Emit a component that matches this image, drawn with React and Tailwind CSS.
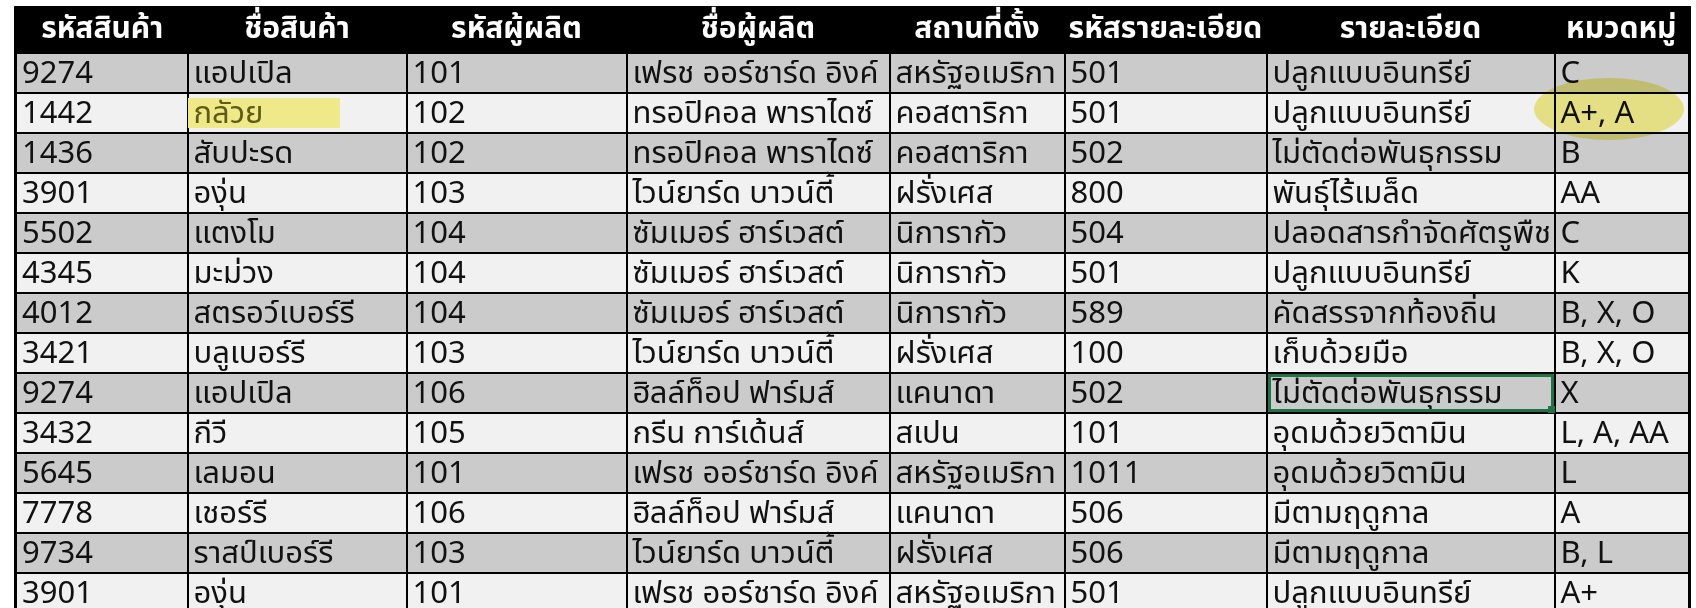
import React from "react";

const cols = [
  { title: "รหัสสินค้า", w: 172 },
  { title: "ชื่อสินค้า", w: 219 },
  { title: "รหัสผู้ผลิต", w: 220 },
  { title: "ชื่อผู้ผลิต", w: 263 },
  { title: "สถานที่ตั้ง", w: 175 },
  { title: "รหัสรายละเอียด", w: 202 },
  { title: "รายละเอียด", w: 288 },
  { title: "หมวดหมู่", w: 135 },
];

const rows = [
  ["9274", "แอปเปิล", "101", "เฟรช ออร์ชาร์ด อิงค์", "สหรัฐอเมริกา", "501", "ปลูกแบบอินทรีย์", "C"],
  ["1442", "กลัวย", "102", "ทรอปิคอล พาราไดซ์", "คอสตาริกา", "501", "ปลูกแบบอินทรีย์", "A+, A"],
  ["1436", "สับปะรด", "102", "ทรอปิคอล พาราไดซ์", "คอสตาริกา", "502", "ไม่ตัดต่อพันธุกรรม", "B"],
  ["3901", "องุ่น", "103", "ไวน์ยาร์ด บาวน์ตี้", "ฝรั่งเศส", "800", "พันธุ์ไร้เมล็ด", "AA"],
  ["5502", "แตงโม", "104", "ซัมเมอร์ ฮาร์เวสต์", "นิการากัว", "504", "ปลอดสารกำจัดศัตรูพืช", "C"],
  ["4345", "มะม่วง", "104", "ซัมเมอร์ ฮาร์เวสต์", "นิการากัว", "501", "ปลูกแบบอินทรีย์", "K"],
  ["4012", "สตรอว์เบอร์รี", "104", "ซัมเมอร์ ฮาร์เวสต์", "นิการากัว", "589", "คัดสรรจากท้องถิ่น", "B, X, O"],
  ["3421", "บลูเบอร์รี", "103", "ไวน์ยาร์ด บาวน์ตี้", "ฝรั่งเศส", "100", "เก็บด้วยมือ", "B, X, O"],
  ["9274", "แอปเปิล", "106", "ฮิลล์ท็อป ฟาร์มส์", "แคนาดา", "502", "ไม่ตัดต่อพันธุกรรม", "X"],
  ["3432", "กีวี", "105", "กรีน การ์เด้นส์", "สเปน", "101", "อุดมด้วยวิตามิน", "L, A, AA"],
  ["5645", "เลมอน", "101", "เฟรช ออร์ชาร์ด อิงค์", "สหรัฐอเมริกา", "1011", "อุดมด้วยวิตามิน", "L"],
  ["7778", "เชอร์รี", "106", "ฮิลล์ท็อป ฟาร์มส์", "แคนาดา", "506", "มีตามฤดูกาล", "A"],
  ["9734", "ราสป์เบอร์รี", "103", "ไวน์ยาร์ด บาวน์ตี้", "ฝรั่งเศส", "506", "มีตามฤดูกาล", "B, L"],
  ["3901", "องุ่น", "101", "เฟรช ออร์ชาร์ด อิงค์", "สหรัฐอเมริกา", "501", "ปลูกแบบอินทรีย์", "A+"],
];

export default function App() {
  return (
    <div className="w-full h-[608px] overflow-hidden bg-white pl-[14px] pt-[6px] font-['Noto_Sans_Thai','Tahoma','Liberation_Sans','Noto_Sans',sans-serif]">
      <div className="relative w-[1674px]">
        <table className="table-fixed border-collapse border-x-[3px] border-black w-[1674px]">
          <colgroup>
            {cols.map((c, i) => (
              <col key={i} style={{ width: c.w }} />
            ))}
          </colgroup>
          <thead>
            <tr className="bg-black h-[47px]">
              {cols.map((c, i) => (
                <th key={i} className="text-white font-bold text-[30px] leading-[40px] text-center px-1 whitespace-nowrap">
                  {c.title}
                </th>
              ))}
            </tr>
          </thead>
          <tbody>
            {rows.map((r, ri) => (
              <tr key={ri} className={ri % 2 === 0 ? "bg-[#cbcbcb]" : "bg-[#f1f1f1]"}>
                {r.map((v, ci) => (
                  <td
                    key={ci}
                    className="relative h-[40px] border-2 border-black px-[5px] pt-[2px] text-[31px] leading-[36px] text-[#111] whitespace-nowrap"
                  >
                    {ri === 1 && ci === 1 ? (
                      <span className="inline-block w-[152px] -ml-[6px] pl-[6px] h-[30px] leading-[32px] bg-[#efe98a] text-[#5e5c16]">{v}</span>
                    ) : (
                      v
                    )}
                    {ri === 8 && ci === 6 && (
                      <div className="absolute inset-0 border-[3px] border-[#217346]">
                        <div className="absolute -right-[4px] -bottom-[4px] w-[7px] h-[7px] bg-[#217346]" />
                      </div>
                    )}
                  </td>
                ))}
              </tr>
            ))}
          </tbody>
        </table>
        <div className="absolute left-[1520px] top-[72px] w-[150px] h-[62px] rounded-[50%] bg-[#efe870] mix-blend-multiply opacity-80 pointer-events-none" />
      </div>
    </div>
  );
}
